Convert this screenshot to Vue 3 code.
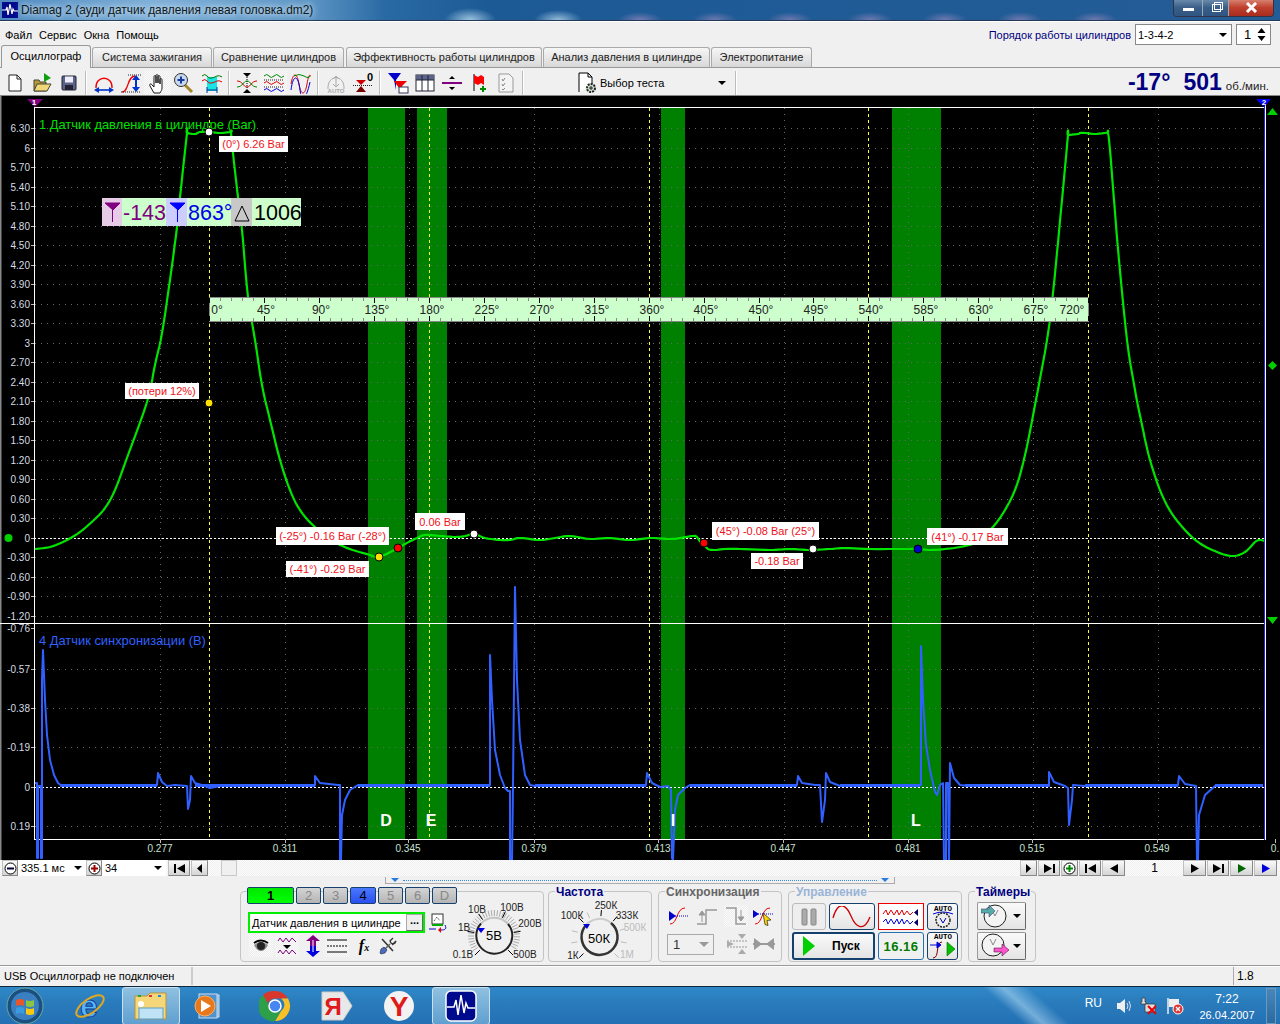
<template>
  <div class="window">
    <!-- title bar -->
    <div class="titlebar">
      <svg class="app-ico" width="16" height="16" viewBox="0 0 16 16">
        <rect width="16" height="16" fill="#000a8c" />
        <path d="M0 8h4l1-3 1 8 2-11 2 10 1-5 1 2h4" fill="none" stroke="#fff" stroke-width="1.2" />
      </svg>
      <span class="title">Diamag 2 (ауди датчик давления левая головка.dm2)</span>
      <div class="win-btns">
        <div class="wb wb-min"><i></i></div>
        <div class="wb wb-max"><b></b><b></b></div>
        <div class="wb wb-close">
          <svg width="13" height="11" viewBox="0 0 13 11">
            <path d="M2 1l9 9M11 1l-9 9" stroke="#fff" stroke-width="3" />
          </svg>
        </div>
      </div>
    </div>

    <!-- menu -->
    <div class="menubar">
      <span v-for="m in menu" :key="m" class="menu-item">{{ m }}</span>
      <span class="order-label">Порядок работы цилиндров</span>
      <div class="combo order-combo">1-3-4-2<span class="arrow"></span></div>
      <div class="combo spin">1
        <svg width="9" height="15" viewBox="0 0 9 15"><path d="M4.5 1l4 5h-8zM.5 9h8l-4 5z" fill="#000" /></svg>
      </div>
    </div>

    <!-- tabs -->
    <div class="tabs">
      <div v-for="t in tabs" :key="t.name" class="tab" :class="{ active: t.active }" :style="{ width: t.w + 'px' }">{{ t.name }}</div>
    </div>

    <!-- toolbar -->
    <div class="toolbar">
      <div class="tb"><svg class="ic" viewBox="0 0 22 22"><path d="M5 3h8l4 4v12H5z" fill="#fff" stroke="#222" /><path d="M13 3v4h4" fill="none" stroke="#222" /></svg></div>
      <div class="tb"><svg class="ic" viewBox="0 0 22 22"><path d="M3 19V8h5l1 2h6v9z" fill="#b89a3a" stroke="#443" /><path d="M3 19l3-7h14l-4 7z" fill="#f0d878" stroke="#443" /><path d="M13 1l7 5-7 4z" fill="#12a012" /></svg></div>
      <div class="tb"><svg class="ic" viewBox="0 0 22 22"><rect x="4" y="4" width="14" height="14" rx="1" fill="#5b6488" stroke="#223" /><rect x="7" y="4.500" width="8" height="6" fill="#eef" /><rect x="7" y="13" width="8" height="5" fill="#223" /></svg></div>
      <i class="sep"></i>
      <div class="tb"><svg class="ic" viewBox="0 0 22 22"><path d="M3 16C2 3 20 3 19 16" fill="none" stroke="#e00" stroke-width="1.3" /><path d="M3 18h16" stroke="#03c" stroke-width="1.6" /><path d="M1 18l5-3v6zM21 18l-5-3v6z" fill="#03c" /></svg></div>
      <div class="tb"><svg class="ic" viewBox="0 0 22 22"><path d="M2 20C9 20 7 4 15 4" fill="none" stroke="#e00" stroke-width="1.3" /><path d="M8 3h13M1 20h20" stroke="#222" stroke-dasharray="1 1" /><path d="M16 6v12" stroke="#03c" stroke-width="2" /><path d="M16 3l4 5h-8zM16 20l4-5h-8z" fill="#03c" /></svg></div>
      <div class="tb dither"><svg class="ic" viewBox="0 0 22 22"><path d="M7 21L3 14c-1-2 1-3 2-1l2 2V5c0-2 2-2 2 0v6V4c0-2 2-2 2 0v7V5c0-2 2-2 2 0v7V8c0-2 2-2 2 0v8c0 2-1 3-2 5z" fill="#fff" stroke="#000" stroke-width=".9" /></svg></div>
      <div class="tb zoom-tb"><svg class="ic" viewBox="0 0 22 22"><path d="M13 13l7 7" stroke="#a8862a" stroke-width="3" /><circle cx="9" cy="8" r="6.5" fill="#c8d8ee" stroke="#333" /><path d="M9 4.500v7M5.500 8h7" stroke="#1638a0" stroke-width="2" /></svg></div>
      <div class="tb"><svg class="ic" viewBox="0 0 22 22"><rect x="6" y="5" width="10" height="14" fill="#19e4e4" /><path d="M1 4q3-3 5 0t5 2 5-2 5 1" fill="none" stroke="#070" /><path d="M1 9q3-3 5 0t5 2 5-2 5 1" fill="none" stroke="#d00" /><path d="M6 18h10" stroke="#039" /><path d="M6 15v6M16 15v6" stroke="#039" /></svg></div>
      <i class="sep"></i>
      <div class="tb"><svg class="ic" viewBox="0 0 22 22"><path d="M1 9c6 0 6 6 10 6s4-6 10-6" fill="none" stroke="#d00" /><path d="M1 15c6 0 6-6 10-6s4 6 10 6" fill="none" stroke="#080" /><path d="M7 1h8l-4 4zM7 21h8l-4-4z" fill="#000" /><path d="M11 5v12" stroke="#000" stroke-dasharray="1 1" /></svg></div>
      <div class="tb dither"><svg class="ic" viewBox="0 0 22 22"><path d="M1 4q3-3 5 0t5 0 5 0 5 0" fill="none" stroke="#080" /><path d="M1 11q3-3 5 0t5 0 5 0 5 0" fill="none" stroke="#d00" /><path d="M1 18q3-3 5 0t5 0 5 0 5 0" fill="none" stroke="#00d" /><path d="M1 8h20M1 15h20" stroke="#222" stroke-dasharray="1 1" /></svg></div>
      <div class="tb"><svg class="ic" viewBox="0 0 22 22"><path d="M1 12c2-12 6-12 8 0s6 12 8 0 3-8 4-8" fill="none" stroke="#d00" /><path d="M1 18c2-16 7-16 9 0s7 6 10-8" fill="none" stroke="#00d" /><path d="M4 4q5-3 10 0t6 0" fill="none" stroke="#080" /></svg></div>
      <i class="sep"></i>
      <div class="tb"><svg class="ic" viewBox="0 0 22 22"><path d="M3 17C2 2 20 2 19 17" fill="none" stroke="#aaa" /><path d="M11 5v9M8 7l3-3 3 3M8 12l3 3 3-3" fill="none" stroke="#aaa" /><text x="11" y="21" class="t-auto" fill="#aaa">AUTO</text></svg></div>
      <div class="tb"><svg class="ic" viewBox="0 0 22 22"><path d="M4 8h10l-5 5z" fill="#c00" /><path d="M4 20h10l-5-6z" fill="#700" /><path d="M1 13.500h20" stroke="#222" stroke-dasharray="1 1" /><text x="15" y="9" class="t-zero">0</text></svg></div>
      <i class="sep"></i>
      <div class="tb"><svg class="ic" viewBox="0 0 22 22"><path d="M1 1h13L9 8v10L7 8z" fill="#00c" /><path d="M7 9h13l-5 5v6z" fill="#e00" /><rect x="12" y="15" width="9" height="6" fill="#fff" stroke="#335" /></svg></div>
      <div class="tb"><svg class="ic" viewBox="0 0 22 22"><rect x="2" y="3" width="18" height="16" fill="#fff" stroke="#223" /><rect x="2" y="3" width="18" height="5" fill="#5b6488" /><path d="M8 3v16M14 3v16M2 8h18" stroke="#223" /></svg></div>
      <div class="tb"><svg class="ic" viewBox="0 0 22 22"><path d="M1 11h20" stroke="#800080" stroke-width="2" /><path d="M8 7h6l-3-3zM8 15h6l-3 3z" fill="#000" /></svg></div>
      <div class="tb"><svg class="ic" viewBox="0 0 22 22"><path d="M6 2v17" stroke="#000" /><path d="M6 3l4 2 3-2 3 2v8l-3-2-3 2-4-2z" fill="#f00" /><path d="M15 14v6M12 17h6" stroke="#080" stroke-width="2" /></svg></div>
      <div class="tb"><svg class="ic" viewBox="0 0 22 22"><path d="M4 2h10l4 4v14H4z" fill="#f4f4f4" stroke="#999" /><path d="M7 7l1 2 2-3M7 12l1 2 2-3M7 17l1 1 2-2" fill="none" stroke="#888" /></svg></div>
      <i class="sep"></i>
      <div class="test-select">
        <svg width="22" height="22" viewBox="0 0 22 22"><path d="M3 20V1h9l4 4v8" fill="#fff" stroke="#000" /><path d="M12 1v4h4" fill="none" stroke="#000" /><circle cx="15" cy="16" r="4" fill="#cfe0cf" stroke="#222" stroke-dasharray="2 1" stroke-width="2" /><path d="M13 16h4M15 14v4" stroke="#222" /></svg>
        <span>Выбор теста</span>
        <span class="arrow test-arrow"></span>
      </div>
      <i class="sep"></i>
      <div class="rpm">
        <b>-17°</b><b class="rpm-val">501</b><span>об./мин.</span>
      </div>
    </div>

    <!-- oscillogram: free canvas, page coordinates -->
    <svg class="scope" width="1280" height="764" viewBox="0 96 1280 764">
      <rect x="0" y="96" width="1280" height="764" fill="#000" />
      <rect x="0" y="96" width="1.5" height="764" fill="#888" />
      <rect v-for="b in bands" :key="b.l" :x="b.x" y="107" :width="b.w" height="732" fill="#008000" />

      <g class="crisp">
        <line v-for="g in gridX" :key="g" :x1="g" :x2="g" y1="108" y2="839" class="dots" />
        <line v-for="g in topAxis" :key="'t' + g.y" x1="35" x2="1265" :y1="g.y" :y2="g.y" class="dots" />
        <line v-for="g in lowGrid" :key="g" x1="35" x2="1265" :y1="g" :y2="g" class="dots" />
        <line v-for="g in cursors" :key="'c' + g" :x1="g" :x2="g" y1="108" y2="839" class="cursor" />
        <line x1="34" x2="1265" y1="538.5" y2="538.5" class="zero" />
        <line x1="34" x2="1265" y1="787.5" y2="787.5" class="zero" />
        <line x1="34" x2="1265" y1="107.5" y2="107.5" stroke="#fff" />
        <line x1="0" x2="1265" y1="623.5" y2="623.5" stroke="#fff" />
        <line x1="34" x2="1265" y1="839.5" y2="839.5" stroke="#fff" />
        <line x1="34.5" x2="34.5" y1="107" y2="840" stroke="#fff" />
        <line x1="1265.5" x2="1265.5" y1="100" y2="840" stroke="#fff" />
        <line x1="1264.5" x2="1264.5" y1="100" y2="840" stroke="#22f" />
        <line x1="34.5" x2="34.5" y1="99" y2="107" stroke="#800080" />
        <line v-for="g in topAxis" :key="'k' + g.y" x1="31" x2="34" :y1="g.y" :y2="g.y" stroke="#bbb" />
        <line v-for="g in lowAxis" :key="'l' + g.y" x1="31" x2="34" :y1="g.y" :y2="g.y" stroke="#bbb" />
        <line v-for="g in timeAxis" :key="'m' + g.x" :x1="g.x" :x2="g.x" y1="839" y2="843" stroke="#bbb" />
      </g>

      <polyline :points="greenTrace" class="trace green" />
      <polyline :points="blueTrace" class="trace blue" />
      <line v-for="s in blueBase" :key="s[0]" :x1="s[0]" :x2="s[1]" y1="785.5" y2="785.5" class="base" />

      <text v-for="g in topAxis" :key="'a' + g.y" x="30" :y="g.y + 3.5" class="axis" text-anchor="end">{{ g.t }}</text>
      <text v-for="g in lowAxis" :key="'b' + g.y" x="30" :y="g.y + 3.5" class="axis" text-anchor="end">{{ g.t }}</text>
      <text v-for="g in timeAxis" :key="'d' + g.x" :x="g.x" y="852" class="axis time" text-anchor="middle">{{ g.t }}</text>

      <text x="39" y="129" class="trace-name" fill="#00e000">1 Датчик давления в цилиндре (Bar)</text>
      <text x="39" y="645" class="trace-name" fill="#3060ff">4 Датчик синхронизации (B)</text>

      <text v-for="b in bands" :key="'n' + b.l" :x="b.lx" y="826" class="band-letter" text-anchor="middle">{{ b.l }}</text>

      <!-- scale markers -->
      <polygon points="27,99 43,99 35,107" fill="#800080" />
      <text x="34" y="105" class="mark-num" text-anchor="middle">1</text>
      <polygon points="1256,99 1271,99 1264,107" fill="#00f" />
      <text x="1264" y="105" class="mark-num" text-anchor="middle">2</text>
      <polygon points="1267,115 1278,115 1272.5,108" fill="#00d000" />
      <polygon points="1272.5,361 1277,365.5 1272.5,370 1268,365.5" fill="#00d000" />
      <polygon points="1267,617 1278,617 1272.5,624" fill="#00d000" />
      <circle cx="8.5" cy="538" r="4" fill="#00d000" />

      <!-- degree ruler -->
      <rect x="209.5" y="297.5" width="879" height="24" fill="#ccffcc" stroke="#888" />
      <g class="crisp">
        <line v-for="t in rulerTicks" :key="t.x" :x1="t.x" :x2="t.x" y1="298" :y2="t.major ? 303 : 301" :stroke="t.major ? '#000' : '#888'" />
        <line v-for="t in rulerTicks" :key="'r' + t.x" :x1="t.x" :x2="t.x" y1="321" :y2="t.major ? 316 : 318" :stroke="t.major ? '#000' : '#888'" />
      </g>
      <text v-for="r in rulerLabels" :key="r.t" :x="r.x" y="314" class="ruler-txt" text-anchor="middle">{{ r.t }}</text>

      <!-- cursor readout -->
      <rect x="102" y="198" width="20" height="28" fill="#e6cce6" />
      <rect x="122" y="198" width="44" height="28" fill="#ccffcc" />
      <rect x="166" y="198" width="21" height="28" fill="#ccccff" />
      <rect x="187" y="198" width="44" height="28" fill="#ccffcc" />
      <rect x="231" y="198" width="21" height="28" fill="#c8c8c8" />
      <rect x="252" y="198" width="49" height="28" fill="#ccffcc" />
      <path d="M105 203h15l-7 7zM112.5 207v15" fill="#800080" stroke="#800080" />
      <path d="M170 203h15l-7 7zM177.5 207v15" fill="#00f" stroke="#00f" />
      <path d="M242 206l7 15h-14z" fill="none" stroke="#000" />
      <text x="123" y="219.5" class="read" fill="#800080">-143</text>
      <text x="188" y="219.5" class="read" fill="#0000e8">863°</text>
      <text x="254" y="219.5" class="read" fill="#000">1006</text>

      <!-- value labels -->
      <g v-for="l in labels" :key="l.t">
        <rect :x="l.x" :y="l.y" :width="l.w" :height="l.h" fill="#fff" />
        <text :x="l.x + l.w / 2" :y="l.y + l.h / 2 + 4" class="val" text-anchor="middle">{{ l.t }}</text>
      </g>
      <circle v-for="d in dots" :key="d.x + '-' + d.y" :cx="d.x" :cy="d.y" r="4" :fill="d.c" stroke="#000" />
    </svg>

    <!-- scroll row -->
    <div class="nav">
      <div class="nb round"><svg width="13" height="13" viewBox="0 0 13 13"><circle cx="6.5" cy="6.5" r="5.5" fill="#fff" stroke="#000" /><path d="M3 6.500h7" stroke="#003" stroke-width="2" /></svg></div>
      <div class="nav-combo w-time">335.1 мс<span class="arrow"></span></div>
      <div class="nb round"><svg width="13" height="13" viewBox="0 0 13 13"><circle cx="6.5" cy="6.5" r="5.5" fill="#fff" stroke="#000" /><path d="M3 6.500h7M6.500 3v7" stroke="#900" stroke-width="2" /></svg></div>
      <div class="nav-combo w-num">34<span class="arrow"></span></div>
      <div class="nb w22"><svg width="11" height="9" viewBox="0 0 11 9"><path d="M0 0h2v9H0zM11 0v9L3 4.500z" /></svg></div>
      <div class="nb w16"><svg width="5" height="9" viewBox="0 0 5 9"><path d="M5 0v9L0 4.500z" /></svg></div>
      <div class="thumb"></div>
      <div class="nav-fill"></div>
      <div class="nb w16"><svg width="5" height="9" viewBox="0 0 5 9"><path d="M0 0v9l5-4.500z" /></svg></div>
      <div class="nb w22"><svg width="11" height="9" viewBox="0 0 11 9"><path d="M9 0h2v9H9zM0 0v9l8-4.500z" /></svg></div>
      <div class="nb w16 flat"><svg width="13" height="13" viewBox="0 0 13 13"><circle cx="6.5" cy="6.5" r="5.5" fill="#fff" stroke="#000" /><path d="M3 6.500h7M6.500 3v7" stroke="#080" stroke-width="2" /></svg></div>
      <div class="nb w22"><svg width="11" height="9" viewBox="0 0 11 9"><path d="M0 0h2v9H0zM11 0v9L3 4.500z" /></svg></div>
      <div class="nb w23"><svg width="8" height="9" viewBox="0 0 8 9"><path d="M8 0v9L0 4.500z" /></svg></div>
      <div class="page-num">1</div>
      <div class="nb w23"><svg width="8" height="9" viewBox="0 0 8 9"><path d="M0 0v9l8-4.500z" /></svg></div>
      <div class="nb w22"><svg width="11" height="9" viewBox="0 0 11 9"><path d="M9 0h2v9H9zM0 0v9l8-4.500z" /></svg></div>
      <div class="nb w23"><svg width="8" height="9" viewBox="0 0 8 9"><path d="M0 0v9l8-4.500z" fill="#060" /></svg></div>
      <div class="nb w23"><svg width="8" height="9" viewBox="0 0 8 9"><path d="M0 0v9l8-4.500z" fill="#00d" /></svg></div>
    </div>

    <!-- control panel -->
    <div class="panel">
      <div class="strip"><span class="tri"></span><span class="strip-dots"></span><span class="tri"></span></div>
      <div class="groups">
        <!-- channel -->
        <div class="group g-channel">
          <div class="ch-left">
            <div class="ch-tabs">
              <div v-for="c in channels" :key="c.t" class="ch" :class="c.cls">{{ c.t }}</div>
            </div>
            <div class="ch-input-row">
              <div class="ch-input">Датчик давления в цилиндре<span class="dots-btn">...</span></div>
              <svg width="18" height="20" viewBox="0 0 18 20"><rect x="3" y="1" width="11" height="10" fill="#fff" stroke="#333" /><path d="M5 8l3-4 3 4" fill="none" stroke="#333" stroke-dasharray="1 1" /><rect x="3" y="11" width="11" height="2" fill="#0a0" /><path d="M0 16h7M16 12c2 4 0 5-4 5" fill="none" stroke="#00c" /><path d="M12 14v6l-3-3z" fill="#e00" /></svg>
            </div>
            <div class="ch-icons">
              <div class="ci dither"><svg width="18" height="14" viewBox="0 0 18 14"><path d="M2 6q7-6 14 0-3 6-7 6T2 6z" fill="#888" /><circle cx="9" cy="7" r="4" fill="#222" /><path d="M2 4q7-5 14 0" fill="none" stroke="#000" stroke-width="2" /></svg></div>
              <div class="ci dither"><svg width="20" height="20" viewBox="0 0 20 20"><path d="M1 5l2-3 3 4 3-4 3 4 3-4 4 4M1 17l2-3 3 4 3-4 3 4 3-4 4 4" fill="none" stroke="#800080" /><path d="M6 9h8l-4 4z" fill="#000" /></svg></div>
              <div class="ci narrow"><svg width="18" height="22" viewBox="0 0 18 22"><path d="M9 0l7 6h-4v5H6V6H2z" fill="#800080" /><path d="M9 22l7-6h-4v-5H6v5H2z" fill="#00d" /><path d="M9 5v12" stroke="#fff" /></svg></div>
              <div class="ci dither"><svg width="20" height="14" viewBox="0 0 20 14"><path d="M0 1h20M0 13h20" stroke="#000" /><path d="M0 7h20" stroke="#000" stroke-dasharray="2 1" /></svg></div>
              <div class="ci fx">f<small>x</small></div>
              <div class="ci"><svg width="18" height="18" viewBox="0 0 18 18"><path d="M3 2l11 12" stroke="#333" stroke-width="1.6" /><path d="M14 1l-3 3 1 2 2 1 3-3-1 2-3 2" fill="none" stroke="#333" stroke-width="1.3" /><path d="M11 7L6 12" stroke="#666" stroke-width="1.6" /><path d="M1 16l1-4 3-2 3 3-2 3-4 1z" fill="#4a6cc0" stroke="#223" stroke-width=".6" /></svg></div>
            </div>
          </div>
          <svg class="knob" width="93" height="66" viewBox="-7 0 93 66">
            <line v-for="(t, i) in hatch" :key="i" :x1="t.x1" :y1="t.y1" :x2="t.x2" :y2="t.y2" stroke="#aaa" />
            <line v-for="(t, i) in hatchMajor" :key="'k' + i" :x1="t.x1" :y1="t.y1" :x2="t.x2" :y2="t.y2" stroke="#000" />
            <path d="M25 26.500A18 18 0 0 1 52 27" fill="none" stroke="#c4c4c4" stroke-width="2" />
            <path d="M52 27A18 18 0 1 1 25 26.500" fill="none" stroke="#222" stroke-width="2" />
            <path d="M21 31h8l-4 5z" fill="#00d" />
            <text x="38" y="43" class="knob-val" text-anchor="middle">5В</text>
            <text x="21" y="16" class="knob-lab" text-anchor="middle">10В</text>
            <text x="56" y="14" class="knob-lab" text-anchor="middle">100В</text>
            <text x="8" y="34" class="knob-lab" text-anchor="middle">1В</text>
            <text x="74" y="30" class="knob-lab" text-anchor="middle">200В</text>
            <text x="7" y="61" class="knob-lab" text-anchor="middle">0.1В</text>
            <text x="69" y="61" class="knob-lab" text-anchor="middle">500В</text>
          </svg>
        </div>

        <!-- frequency -->
        <div class="group g-freq">
          <span class="legend navy">Частота</span>
          <svg class="knob" width="104" height="71" viewBox="0 0 104 71">
            <line v-for="(t, i) in sparse" :key="i" :x1="t.x1" :y1="t.y1" :x2="t.x2" :y2="t.y2" :stroke="t.c" />
            <path d="M37 33A18 18 0 0 1 62 31" fill="none" stroke="#ccc" stroke-width="2" />
            <path d="M62 31A18 18 0 1 1 37 33" fill="none" stroke="#333" stroke-width="2.5" />
            <path d="M34 32h7l-3 5z" fill="#00d" />
            <text x="50" y="51" class="knob-val" text-anchor="middle">50К</text>
            <text x="23" y="27" class="knob-lab" text-anchor="middle">100К</text>
            <text x="57" y="17" class="knob-lab" text-anchor="middle">250К</text>
            <text x="78" y="27" class="knob-lab" text-anchor="middle">333К</text>
            <text x="86" y="39" class="knob-lab off" text-anchor="middle">500К</text>
            <text x="24" y="67" class="knob-lab" text-anchor="middle">1К</text>
            <text x="78" y="66" class="knob-lab off" text-anchor="middle">1М</text>
          </svg>
        </div>

        <!-- sync -->
        <div class="group g-sync">
          <span class="legend grey">Синхронизация</span>
          <div class="sync-row">
            <svg class="si" viewBox="0 0 24 22"><path d="M3 19c8 0 6-16 15-16" fill="none" stroke="#e00" /><path d="M6 11h16" stroke="#00c" stroke-dasharray="1 1" /><path d="M2 6l7 5-7 5z" fill="#00c" /></svg>
            <svg class="si" viewBox="0 0 24 22"><path d="M2 19h9V5h11" fill="none" stroke="#999" stroke-width="1.5" /><path d="M7 17V7M4 10l3-4 3 4z" fill="#999" stroke="#999" /></svg>
            <svg class="si dither" viewBox="0 0 24 22"><path d="M2 3h10v16h10" fill="none" stroke="#999" stroke-width="1.5" /><path d="M17 5v10M14 12l3 4 3-4z" fill="#999" stroke="#999" /></svg>
            <svg class="si" viewBox="0 0 24 22"><path d="M3 19c8 0 6-16 15-16" fill="none" stroke="#e00" /><path d="M6 9h16" stroke="#00c" stroke-dasharray="1 1" /><path d="M1 5l6 4-6 4z" fill="#00c" /><path d="M11 8l8 7-4 .5 1 5-3-1z" fill="#ffd400" stroke="#222" stroke-width=".7" /></svg>
          </div>
          <div class="sync-row second">
            <div class="combo sync-combo">1<span class="arrow grey-arrow"></span></div>
            <svg class="si first" viewBox="0 0 24 22"><path d="M2 8h20M2 14h20" stroke="#999" stroke-dasharray="2 1" /><path d="M13 1h8l-4 5zM13 21h8l-4-5z" fill="#aaa" /><path d="M2 8l7 3-7 3z" fill="#aaa" /></svg>
            <svg class="si" viewBox="0 0 24 22"><path d="M1 11h22" stroke="#999" stroke-width="2" /><path d="M2 5l8 6-8 6zM22 5l-8 6 8 6z" fill="#999" /></svg>
          </div>
        </div>

        <!-- control -->
        <div class="group g-ctrl">
          <span class="legend faded">Управление</span>
          <div class="btn b-flat"><svg width="16" height="18" viewBox="0 0 16 18"><rect x="1" y="1" width="5" height="16" rx="1" fill="#aaa" stroke="#888" /><rect x="10" y="1" width="5" height="16" rx="1" fill="#aaa" stroke="#888" /></svg></div>
          <div class="btn b-navy"><svg width="40" height="22" viewBox="0 0 40 22"><path d="M1 12C6-6 14-2 19 10s13 16 19 1" fill="none" stroke="#c00" stroke-width="1.3" /></svg></div>
          <div class="btn b-red"><svg width="40" height="20" viewBox="0 0 40 20"><path d="M2 7l3-4 2 5 3-5 3 5 3-5 2 5 3-5 2 5 3-4 3 4 3-3" fill="none" stroke="#d00" /><path d="M2 15l3-3 2 5 3-5 3 5 3-5 2 5 3-5 2 5 3-4 3 4 3-3" fill="none" stroke="#00d" /><path d="M37 2v7l-4-3.500zM37 12v7l-4-3.500z" fill="#006" /></svg></div>
          <div class="btn b-navy"><svg width="26" height="24" viewBox="0 0 26 24"><text x="13" y="6" class="t-btn-auto">AUTO</text><path d="M3 9q10-4 20 0" fill="none" stroke="#00d" /><circle cx="13" cy="15" r="7" fill="#eee" stroke="#222" stroke-dasharray="2 1" stroke-width="1.5" /><path d="M10 13l3 5 3-5" fill="none" stroke="#00a" /></svg></div>
          <div class="btn b-navy b-start">
            <svg width="14" height="20" viewBox="0 0 14 20"><path d="M1 0l12 10L1 20z" fill="#00d000" /></svg>
            <span>Пуск</span>
          </div>
          <div class="btn b-blue b-time">16.16</div>
          <div class="btn b-navy"><svg width="26" height="26" viewBox="0 0 26 26"><text x="13" y="6" class="t-btn-auto">AUTO</text><path d="M3 25c7 0 2-16 9-16" fill="none" stroke="#800" /><path d="M0 12h7M7 9l4 3-4 3z" fill="#00d" stroke="#00d" /><path d="M17 9l8 7-8 7z" fill="#00c000" stroke="#060" stroke-width=".6" /></svg></div>
        </div>

        <!-- timers -->
        <div class="group g-timers">
          <span class="legend navy">Таймеры</span>
          <div class="btn timer">
            <svg width="30" height="24" viewBox="0 0 30 24"><circle cx="14" cy="12" r="11" fill="#f4f4f4" stroke="#222" /><path d="M14 12l3-6M14 12l-3-6" stroke="#888" /><path d="M0 5h8V1l6 6-6 6V9H0z" fill="#55aaaa" stroke="#336" stroke-width=".5" /></svg>
            <span class="arrow"></span>
          </div>
          <div class="btn timer">
            <svg width="30" height="26" viewBox="0 0 30 26"><circle cx="12" cy="12" r="11" fill="#f4f4f4" stroke="#222" /><path d="M12 12l3-6M12 12l-3-6" stroke="#888" /><path d="M13 15h8v-4l7 6-7 6v-4h-8z" fill="#ff55cc" stroke="#303" stroke-width=".5" /></svg>
            <span class="arrow"></span>
          </div>
        </div>
      </div>
    </div>

    <!-- status -->
    <div class="status">
      <span class="st-main">USB Осциллограф не подключен</span>
      <span class="st-fill"></span>
      <span class="st-ver">1.8</span>
    </div>

    <!-- taskbar -->
    <div class="taskbar">
      <svg class="orb" width="40" height="38" viewBox="0 0 40 38">
        <circle cx="20" cy="19" r="18" fill="#1a4f80" stroke="#6aa" />
        <circle cx="20" cy="19" r="14" fill="#3a7fc0" />
        <path d="M11 13q4-2 8 0v6q-4-2-8 0z" fill="#e8562a" />
        <path d="M21 13q4 2 8 0v6q-4 2-8 0z" fill="#8cc63f" />
        <path d="M11 21q4-2 8 0v6q-4-2-8 0z" fill="#3a9be0" />
        <path d="M21 21q4 2 8 0v6q-4 2-8 0z" fill="#fdc70c" />
      </svg>
      <div class="task t-ie">
        <svg width="34" height="34" viewBox="0 0 34 34">
          <text x="16" y="28" class="ie">e</text>
          <ellipse cx="17" cy="17" rx="16" ry="7" transform="rotate(-35 17 17)" fill="none" stroke="#e0a820" stroke-width="2" />
        </svg>
      </div>
      <div class="task t-active t-folder">
        <svg width="38" height="32" viewBox="0 0 38 32">
          <path d="M3 6h12l3-3h16v26H3z" fill="#f5d77a" stroke="#b8923a" />
          <rect x="6" y="5" width="3" height="2" fill="#2a2" /><rect x="17" y="5" width="3" height="2" fill="#d33" /><rect x="26" y="5" width="3" height="2" fill="#28d" />
          <rect x="7" y="18" width="24" height="11" fill="#bfe3f5" stroke="#5a9fcb" />
          <circle cx="9" cy="14" r="3" fill="#fff" />
        </svg>
      </div>
      <div class="task t-wmp">
        <svg width="34" height="30" viewBox="0 0 34 30">
          <rect x="14" y="4" width="16" height="22" fill="#7fb8e0" stroke="#cde" />
          <rect x="10" y="3" width="18" height="24" fill="#4f92cc" stroke="#cde" />
          <circle cx="16" cy="15" r="10" fill="#e8781c" stroke="#ffb060" />
          <path d="M12 9l10 6-10 6z" fill="#fff" />
        </svg>
      </div>
      <div class="task t-chrome">
        <svg width="32" height="32" viewBox="0 0 32 32">
          <path d="M16 1a15 15 0 0 1 13 7.500H16a7.500 7.500 0 0 0-7 5L4 5A15 15 0 0 1 16 1z" fill="#d9372c" />
          <path d="M29 8.500A15 15 0 0 1 16 31l6-10a7.500 7.500 0 0 0 0-12.500z" fill="#f6c026" />
          <path d="M16 31A15 15 0 0 1 4 5l6.500 11.500A7.500 7.500 0 0 0 22 21z" fill="#2d9f48" />
          <circle cx="16" cy="16" r="6" fill="#4586f2" stroke="#fff" stroke-width="1.5" />
        </svg>
      </div>
      <div class="task t-ya">
        <svg width="34" height="32" viewBox="0 0 34 32">
          <path d="M2 2h21l9 14-9 14H2z" fill="#e8e8e8" stroke="#ccc" />
          <text x="13" y="25" class="ya">Я</text>
        </svg>
      </div>
      <div class="task t-yb">
        <svg width="32" height="32" viewBox="0 0 32 32">
          <circle cx="16" cy="16" r="15" fill="#f2f2f2" />
          <text x="16" y="26" class="yb">Y</text>
        </svg>
      </div>
      <div class="task t-active t-app">
        <svg width="32" height="32" viewBox="0 0 32 32">
          <rect x="1" y="1" width="30" height="30" rx="5" fill="#000a8c" stroke="#fff" stroke-width="1.5" />
          <path d="M2 17h7l2-7 2 15 3-20 3 18 2-10 2 5h7" fill="none" stroke="#fff" stroke-width="1.5" />
        </svg>
      </div>
      <div class="tray">
        <span class="lang">RU</span>
        <svg width="16" height="16" viewBox="0 0 16 16"><path d="M1 5h3l5-4v14l-5-4H1z" fill="#eee" /><path d="M11 5q2 3 0 6M13 3q3 5 0 10" fill="none" stroke="#dde" /></svg>
        <svg width="18" height="18" viewBox="0 0 18 18"><path d="M2 1h3v4h1v2H1V5h1zM5 7h10v8H5z" fill="#ddd" stroke="#333" stroke-width=".7" /><path d="M8 9l8 8M16 9l-8 8" stroke="#e00" stroke-width="2" /></svg>
        <svg width="18" height="18" viewBox="0 0 18 18"><path d="M2 1v16" stroke="#eee" stroke-width="1.5" /><path d="M3 2h10v8H3z" fill="#eee" /><circle cx="12" cy="12" r="5" fill="#d33" stroke="#fff" /><path d="M10 10l4 4M14 10l-4 4" stroke="#fff" stroke-width="1.3" /></svg>
        <div class="clock"><span>7:22</span><span class="date">26.04.2007</span></div>
        <div class="show-desk"></div>
      </div>
    </div>
  </div>
</template>

<script setup>
const menu = ['Файл', 'Сервис', 'Окна', 'Помощь']
const tabs = [
  { name: 'Осциллограф', w: 90, active: true },
  { name: 'Система зажигания', w: 120 },
  { name: 'Сравнение цилиндров', w: 131 },
  { name: 'Эффективность работы цилиндров', w: 196 },
  { name: 'Анализ давления в цилиндре', w: 167 },
  { name: 'Электропитание', w: 101 }
]
const channels = [
  { t: '1', cls: 'on-green' },
  { t: '2' },
  { t: '3' },
  { t: '4', cls: 'on-blue' },
  { t: '5' },
  { t: '6' },
  { t: 'D' }
]

const topVals = ['6.30', '6', '5.70', '5.40', '5.10', '4.80', '4.50', '4.20', '3.90', '3.60', '3.30', '3', '2.70', '2.40', '2.10', '1.80', '1.50', '1.20', '0.90', '0.60', '0.30', '0', '-0.30', '-0.60', '-0.90', '-1.20']
const topAxis = topVals.map((t, i) => ({ t, y: Math.round(128 + i * 19.5) + 0.5 }))
const lowAxis = [
  { t: '-0.76', y: 628.5 },
  { t: '-0.57', y: 669.5 },
  { t: '-0.38', y: 708.5 },
  { t: '-0.19', y: 747.5 },
  { t: '0', y: 787.5 },
  { t: '0.19', y: 826.5 }
]
const lowGrid = [669.5, 708.5, 747.5, 826.5]
const gridX = [160.5, 285.5, 409.5, 534.5, 659.5, 784.5, 908.5, 1033.5, 1158.5]
const cursors = [209.5, 429.5, 649.5, 868.5, 1088.5]
const timeAxis = [
  { t: '0.277', x: 160 },
  { t: '0.311', x: 285 },
  { t: '0.345', x: 408 },
  { t: '0.379', x: 534 },
  { t: '0.413', x: 658 },
  { t: '0.447', x: 783 },
  { t: '0.481', x: 908 },
  { t: '0.515', x: 1032 },
  { t: '0.549', x: 1157 },
  { t: '0.', x: 1275 }
]
const bands = [
  { l: 'D', x: 368, w: 37, lx: 386 },
  { l: 'E', x: 417, w: 30, lx: 431 },
  { l: 'I', x: 661, w: 24, lx: 673 },
  { l: 'L', x: 892, w: 49, lx: 916 }
]

// Catmull-Rom through the traced points; a repeated point keeps a sharp corner
const smooth = (str) => {
  const p = str.split(' ').map((s) => s.split(',').map(Number))
  const out = []
  for (let i = 0; i < p.length - 1; i++) {
    const a = p[Math.max(i - 1, 0)]
    const b = p[i]
    const c = p[i + 1]
    const d = p[Math.min(i + 2, p.length - 1)]
    for (let k = 0; k < 5; k++) {
      const t = k / 5
      const f = (n) =>
        0.5 * (2 * b[n] + (c[n] - a[n]) * t + (2 * a[n] - 5 * b[n] + 4 * c[n] - d[n]) * t * t + (3 * b[n] - a[n] - 3 * c[n] + d[n]) * t * t * t)
      out.push(f(0).toFixed(1) + ',' + f(1).toFixed(1))
    }
  }
  out.push(p[p.length - 1].join(','))
  return out.join(' ')
}

const greenTrace = smooth('35,549 50,547 65,541 80,532 95,519 105,508 115,490 128,455 147,402 155,365 162,333 170,280 177,227 180,197 187,133 187,133 195,134 200,132 209,132 220,133 231,132 231,132 233,153 238,197 242,230 248,297 255,340 262,385 270,420 280,460 290,490 300,510 315,527 340,545 370,555 379,557 398,548 405,544 417,538 425,535 440,536 455,537 465,536 474,534 485,538 500,540 510,540 520,538 540,540 555,538 570,536 590,539 610,538 630,540 650,538 670,539 680,538 693,536 697,537 701,543 704,544 708,549 715,550 725,549 740,549 770,550 790,549 810,550 830,549 845,548 870,549 900,549 918,549 930,550 945,549 960,547 975,543 985,535 1000,518 1015,490 1025,455 1035,405 1047,340 1053,293 1062,200 1068,135 1068,135 1078,134 1080,133 1085,133 1095,134 1105,133 1108,132 1108,132 1110,150 1114,200 1119,260 1127,340 1135,390 1142,425 1150,460 1162,495 1175,518 1193,538 1210,549 1231,556 1245,552 1255,542 1260,540 1264,541')
const blueTrace = '35,783 37,783 37,858 38,858 38,786 41,786 41,858 42,858 42,680 43,650 45,700 47,735 50,760 54,775 58,783 62,786 70,785 157,785 158,773 162,782 167,786 175,785 187,786 188,809 190,800 191,776 195,783 205,786 210,788 220,786 315,785 315,776 320,783 338,785 340,785 340,860 341,860 342,815 345,800 350,790 358,785 490,785 490,655 492,700 495,750 500,775 505,788 508,791 510,791 510,860 512,860 513,787 515,587 517,680 520,740 525,775 530,785 535,786 646,785 647,773 652,783 660,787 668,786 671,790 672,858 673,860 675,810 678,795 685,788 690,785 797,785 798,776 802,783 815,785 820,785 822,822 825,800 826,773 830,782 840,786 848,785 921,785 921,646 923,700 926,745 930,770 935,792 937,795 940,785 943,783 944,860 946,860 946,783 948,783 949,860 950,763 954,778 960,785 970,786 1049,786 1049,772 1054,782 1065,786 1068,788 1069,825 1072,800 1073,785 1085,786 1178,785 1179,776 1185,784 1196,786 1197,860 1198,860 1199,815 1205,795 1215,786 1263,785'
// the flat stretches of the sync trace are thicker than its spikes
const blueBase = [[60, 157], [195, 315], [358, 490], [535, 646], [690, 797], [840, 920], [965, 1049], [1085, 1178], [1215, 1263]]

const rulerTicks = Array.from({ length: 81 }, (_, i) => ({
  x: Math.round(209 + i * 10.99) + 0.5,
  major: i % 5 === 0
}))
const rulerLabels = [
  { t: '0°', x: 217 }, { t: '45°', x: 266 }, { t: '90°', x: 321 }, { t: '135°', x: 377 },
  { t: '180°', x: 432 }, { t: '225°', x: 487 }, { t: '270°', x: 542 }, { t: '315°', x: 597 },
  { t: '360°', x: 652 }, { t: '405°', x: 706 }, { t: '450°', x: 761 }, { t: '495°', x: 816 },
  { t: '540°', x: 871 }, { t: '585°', x: 926 }, { t: '630°', x: 981 }, { t: '675°', x: 1036 },
  { t: '720°', x: 1072 }
]

const labels = [
  { t: '(0°) 6.26 Bar', x: 219, y: 136, w: 69, h: 16 },
  { t: '(потери 12%)', x: 125, y: 383, w: 74, h: 16 },
  { t: '(-25°) -0.16 Bar (-28°)', x: 276, y: 527, w: 113, h: 18 },
  { t: '(-41°) -0.29 Bar', x: 286, y: 561, w: 83, h: 16 },
  { t: '0.06 Bar', x: 415, y: 513, w: 50, h: 17 },
  { t: '(45°) -0.08 Bar (25°)', x: 712, y: 522, w: 107, h: 18 },
  { t: '-0.18 Bar', x: 751, y: 553, w: 52, h: 16 },
  { t: '(41°) -0.17 Bar', x: 927, y: 528, w: 81, h: 17 }
]
const dots = [
  { x: 209, y: 132, c: '#fff' },
  { x: 209, y: 403, c: '#ffe000' },
  { x: 379, y: 557, c: '#ffe000' },
  { x: 398, y: 548, c: '#f00' },
  { x: 474, y: 534, c: '#fff' },
  { x: 704, y: 543, c: '#f00' },
  { x: 813, y: 549, c: '#fff' },
  { x: 918, y: 549, c: '#00c' }
]

// dial ticks around a knob centre, angles in degrees
const ray = (cx, cy, a, r1, r2) => {
  const s = Math.sin((a * Math.PI) / 180)
  const c = Math.cos((a * Math.PI) / 180)
  return { x1: cx + r1 * s, y1: cy - r1 * c, x2: cx + r2 * s, y2: cy - r2 * c }
}
const hatch = []
for (let a = -125; a <= 125; a += 7) hatch.push(ray(38, 39, a, 20, 26))
const hatchMajor = [-135, -80, -35, 25, 80, 135].map((a) => ray(38, 39, a, 20, 27))
const sparse = [
  { a: -135, c: '#000' }, { a: -100, c: '#bbb' }, { a: -75, c: '#bbb' }, { a: -45, c: '#000' },
  { a: -25, c: '#bbb' }, { a: 5, c: '#000' }, { a: 40, c: '#000' }, { a: 70, c: '#bbb' },
  { a: 100, c: '#bbb' }, { a: 135, c: '#bbb' }
].map((t) => ({ ...ray(50, 46, t.a, 22, 28), c: t.c }))
</script>

<style scoped>
.window {
  width: 1280px;
  height: 1024px;
  overflow: hidden;
  background: #f0f0f0;
  font-family: "Liberation Sans", Arial, sans-serif;
  font-size: 11px;
  color: #000;
}
svg {
  display: block;
  flex: none;
}

/* title bar */
.titlebar {
  height: 21px;
  display: flex;
  align-items: center;
  padding-left: 2px;
  box-sizing: border-box;
  border-bottom: 1px solid #223a55;
  background:
    radial-gradient(ellipse 26px 12px at 470px 20px, rgba(200, 230, 245, 0.75), transparent),
    radial-gradient(ellipse 24px 10px at 558px 20px, rgba(200, 230, 245, 0.7), transparent),
    radial-gradient(ellipse 22px 8px at 640px 20px, rgba(190, 150, 200, 0.55), transparent),
    radial-gradient(ellipse 22px 8px at 715px 20px, rgba(190, 150, 200, 0.5), transparent),
    radial-gradient(ellipse 22px 8px at 790px 20px, rgba(190, 150, 200, 0.5), transparent),
    radial-gradient(ellipse 22px 8px at 870px 20px, rgba(190, 150, 200, 0.5), transparent),
    radial-gradient(ellipse 22px 8px at 945px 20px, rgba(190, 150, 200, 0.5), transparent),
    radial-gradient(ellipse 22px 8px at 1020px 20px, rgba(190, 150, 200, 0.5), transparent),
    radial-gradient(ellipse 22px 8px at 1095px 20px, rgba(190, 150, 200, 0.5), transparent),
    linear-gradient(90deg, #4f8ac0 0, #7fb0d8 12%, #5f97c6 24%, #2a6aa4 30%, #1c5a96 38%, #245c96 100%);
}
.app-ico {
  margin-right: 3px;
}
.title {
  font-size: 11.9px;
  color: #101820;
  text-shadow: 0 0 6px #cfe3f2, 0 0 6px #cfe3f2;
}
.win-btns {
  margin-left: auto;
  margin-right: 6px;
  margin-top: -4px;
  height: 17px;
  display: flex;
  border: 1px solid #334;
  border-top: none;
  border-radius: 0 0 4px 4px;
  overflow: hidden;
}
.wb {
  display: flex;
  align-items: center;
  justify-content: center;
  width: 28px;
  background: linear-gradient(#6f8fae, #3a5f88 50%, #2e5682);
  border-right: 1px solid #9ab;
}
.wb-min i {
  display: block;
  width: 11px;
  height: 3px;
  margin-top: 4px;
  background: #fff;
}
.wb-max {
  width: 25px;
  position: relative;
}
.wb-max b {
  display: block;
  width: 7px;
  height: 6px;
  border: 1px solid #fff;
  position: absolute;
  left: 9px;
  top: 5px;
}
.wb-max b:first-child {
  left: 11px;
  top: 3px;
}
.wb-close {
  width: 44px;
  border-right: none;
  background: linear-gradient(#d98878, #c0402e 50%, #a82c1c);
}

/* menu */
.menubar {
  height: 26px;
  display: flex;
  align-items: center;
  padding-left: 5px;
  box-sizing: border-box;
  border-top: 1px solid #fff;
}
.menu-item {
  margin-right: 7px;
}
.order-label {
  margin-left: auto;
  color: #000080;
  margin-right: 4px;
}
.combo {
  position: relative;
  background: #fff;
  border: 1px solid #888;
  height: 21px;
  box-sizing: border-box;
  display: flex;
  align-items: center;
  padding-left: 2px;
}
.order-combo {
  width: 97px;
  margin-right: 4px;
}
.spin {
  width: 35px;
  margin-right: 9px;
  padding-left: 7px;
  font-size: 13px;
}
.spin svg {
  position: absolute;
  right: 4px;
  top: 2px;
}
.arrow {
  display: block;
  width: 0;
  height: 0;
  border: 4px solid transparent;
  border-top: 4px solid #000;
  border-bottom: none;
  margin-left: auto;
  margin-right: 4px;
}
.grey-arrow {
  border-top-color: #999;
  border-width: 5px;
  border-bottom: none;
}

/* tabs */
.tabs {
  height: 21px;
  display: flex;
  align-items: flex-end;
  padding-left: 1px;
  box-sizing: border-box;
  border-bottom: 1px solid #999;
  position: relative;
  z-index: 1;
}
.tab {
  height: 20px;
  box-sizing: border-box;
  text-align: center;
  line-height: 19px;
  flex: none;
  margin-right: 1px;
  border: 1px solid #aaa;
  border-bottom: none;
  border-radius: 3px 3px 0 0;
  background: linear-gradient(#f6f6f6, #d8d8d8);
  color: #222;
}
.tab:nth-child(3) {
  margin-right: 2px;
}
.tab.active {
  height: 23px;
  margin-bottom: -1px;
  background: #f0f0f0;
  color: #000;
  line-height: 20px;
  border-color: #999;
}

/* toolbar */
.toolbar {
  height: 28px;
  display: flex;
  align-items: center;
  padding: 2px 0 0 1px;
  box-sizing: border-box;
  border-bottom: 1px solid #888;
}
.tb {
  width: 27px;
  height: 25px;
  display: flex;
  align-items: center;
  justify-content: center;
}
.zoom-tb {
  margin-left: -2px;
  margin-right: 2px;
}
.ic {
  width: 22px;
  height: 22px;
}
.dither {
  background: repeating-conic-gradient(#fbfbfb 0 25%, #ececec 0 50%) 0 0 / 2px 2px;
}
.sep {
  width: 2px;
  height: 24px;
  margin: 0 3px;
  border-left: 1px solid #bbb;
  border-right: 1px solid #fff;
  box-sizing: border-box;
}
.test-select {
  width: 205px;
  display: flex;
  align-items: center;
  box-sizing: border-box;
  padding-left: 49px;
}
.test-select span {
  margin-left: 2px;
}
.test-arrow {
  margin-left: auto !important;
  margin-right: 6px;
}
.rpm {
  margin-left: auto;
  margin-right: 11px;
  display: flex;
  align-items: baseline;
  color: #000080;
}
.rpm b {
  font-size: 23px;
}
.rpm-val {
  margin-left: 13px;
}
.rpm span {
  color: #222;
  margin-left: 4px;
  font-size: 11.5px;
}

/* scope */
.scope {
  font-family: "Liberation Sans", Arial, sans-serif;
}
.crisp {
  shape-rendering: crispEdges;
}
.dots {
  stroke: #666;
  stroke-dasharray: 1 5;
}
.cursor {
  stroke: #ffff30;
  stroke-dasharray: 3 3;
}
.zero {
  stroke: #fff;
  stroke-dasharray: 2 2;
}
.trace {
  fill: none;
  stroke-width: 2.2;
  stroke-linejoin: round;
}
.green {
  stroke: #00e400;
}
.blue {
  stroke: #3060ff;
  stroke-width: 2;
}
.base {
  stroke: #3060ff;
  stroke-width: 3;
  shape-rendering: crispEdges;
}
.axis {
  font-size: 10px;
  fill: #d4dce6;
}
.time {
  fill: #c8e0d0;
}
.trace-name {
  font-size: 12.9px;
}
.band-letter {
  font-size: 16px;
  font-weight: bold;
  fill: #fff;
}
.mark-num {
  font-size: 8px;
  font-weight: bold;
  fill: #fff;
}
.ruler-txt {
  font-size: 12px;
  fill: #222;
}
.read {
  font-size: 21.5px;
}
.val {
  font-size: 11px;
  fill: #f01020;
}

/* scroll row */
.nav {
  height: 16px;
  display: flex;
  padding-left: 2px;
  padding-right: 2px;
  box-sizing: border-box;
  background: repeating-conic-gradient(#fcfcfc 0 25%, #f0f0f0 0 50%) 0 0 / 2px 2px;
}
.nb {
  height: 16px;
  box-sizing: border-box;
  display: flex;
  align-items: center;
  justify-content: center;
  flex: none;
  background: linear-gradient(#fafafa, #d4d4d4);
  border: 1px solid #c0c0c0;
  border-right-color: #888;
  border-bottom-color: #888;
}
.round,
.flat {
  width: 16px;
}
.w16 {
  width: 17px;
  margin-right: 1px;
}
.w22 {
  width: 22px;
  margin-right: 1px;
}
.w23 {
  width: 23px;
  margin-right: 1px;
}
.nav-combo {
  height: 16px;
  background: #fff;
  display: flex;
  align-items: center;
  padding-left: 3px;
  box-sizing: border-box;
  font-size: 11px;
}
.w-time {
  width: 68px;
}
.w-num {
  width: 64px;
  margin-right: 2px;
}
.thumb {
  width: 16px;
  height: 16px;
  margin-left: 12px;
  background: #f0f0f0;
  border: 1px solid #c8c8c8;
  box-sizing: border-box;
}
.nav-fill {
  flex: 1;
}
.page-num {
  width: 57px;
  text-align: center;
  font-size: 12px;
  line-height: 16px;
}

/* control panel */
.panel {
  height: 89px;
  box-sizing: border-box;
  border-bottom: 1px solid #999;
}
.strip {
  width: 510px;
  height: 7px;
  margin: 1px 0 0 385px;
  box-sizing: border-box;
  border: 1px solid #aaa;
  border-top: none;
  display: flex;
  align-items: center;
  padding: 0 5px;
}
.strip-dots {
  flex: 1;
  border-top: 1px dotted #3a8ae0;
  margin: 0 4px;
}
.tri {
  width: 0;
  height: 0;
  border: 4px solid transparent;
  border-top: 4px solid #2a7ae0;
  border-bottom: none;
}
.groups {
  display: flex;
  margin: 7px 0 0 240px;
  height: 72px;
}
.group {
  position: relative;
  height: 71px;
  box-sizing: border-box;
  border: 1px solid #c4c4c4;
  border-radius: 4px;
  margin-right: 6px;
  flex: none;
}
.legend {
  position: absolute;
  top: -6px;
  left: 6px;
  padding: 0 1px;
  background: #f0f0f0;
  font-size: 12px;
  line-height: 13px;
  font-weight: bold;
  white-space: nowrap;
}
.navy {
  color: #000080;
}
.grey {
  color: #666;
}
.faded {
  color: #9ab4d8;
}
.g-channel {
  width: 304px;
  display: flex;
  margin-right: 4px;
}
.ch-left {
  width: 208px;
  padding-left: 6px;
  box-sizing: border-box;
  flex: none;
}
.ch-tabs {
  display: flex;
  margin-top: -5px;
  height: 17px;
}
.ch {
  height: 17px;
  width: 25px;
  margin-right: 2px;
  flex: none;
  box-sizing: border-box;
  text-align: center;
  font-size: 13px;
  line-height: 15px;
  color: #888;
  border: 1px solid #16406e;
  border-radius: 2px;
  background: linear-gradient(#d4d4d4, #b4b4b4);
}
.ch.on-green {
  width: 47px;
  color: #000;
  font-weight: bold;
  background: linear-gradient(#00e800, #00ff00);
}
.ch.on-blue {
  width: 26px;
  color: #000;
  background: linear-gradient(#4a78ff, #2a50f0);
}
.ch-input-row {
  display: flex;
  align-items: center;
  margin: 8px 0 0 1px;
}
.ch-input {
  width: 177px;
  height: 21px;
  box-sizing: border-box;
  border: 2px solid #00ee00;
  background: #fff;
  display: flex;
  align-items: center;
  padding-left: 2px;
  margin-right: 4px;
  white-space: nowrap;
  flex: none;
}
.dots-btn {
  margin-left: auto;
  margin-right: 0;
  width: 17px;
  height: 17px;
  line-height: 11px;
  text-align: center;
  font-weight: bold;
  border: 1px solid #aaa;
  border-right-color: #666;
  border-bottom-color: #666;
  box-sizing: border-box;
  background: #eee;
}
.ch-icons {
  display: flex;
  margin: 1px 0 0 2px;
  align-items: center;
}
.ci {
  width: 24px;
  height: 23px;
  margin-right: 2px;
  flex: none;
  display: flex;
  align-items: center;
  justify-content: center;
}
.ci.narrow {
  margin: 0 3px;
  width: 18px;
}
.fx {
  font-family: "Liberation Serif", serif;
  font-style: italic;
  font-weight: bold;
  font-size: 16px;
  margin-left: 3px;
  width: 20px;
}
.fx small {
  font-size: 10px;
  margin-top: 4px;
}
.knob {
  margin-top: 5px;
}
.knob-lab {
  font-size: 10px;
  fill: #222;
}
.knob-lab.off {
  fill: #bbb;
}
.knob-val {
  font-size: 13px;
  fill: #000;
}
.g-freq {
  width: 104px;
}
.g-freq .knob {
  margin-top: 0;
}
.g-sync {
  width: 124px;
  padding: 13px 5px 0 8px;
}
.sync-row {
  display: flex;
  justify-content: space-between;
  align-items: center;
}
.sync-row.second {
  margin-top: 6px;
  justify-content: flex-start;
}
.si {
  width: 24px;
  height: 22px;
}
.si.first {
  margin: 0 3px 0 11px;
}
.sync-combo {
  width: 47px;
  background: transparent;
  border-color: #aaa;
  font-size: 13px;
  color: #333;
  padding-left: 5px;
}
.g-ctrl {
  width: 174px;
  display: grid;
  grid-template-columns: 34px 46px 46px 31px;
  grid-template-rows: 27px 28px;
  column-gap: 3px;
  row-gap: 2px;
  padding: 11px 0 0 3px;
}
.btn {
  box-sizing: border-box;
  border-radius: 3px;
  display: flex;
  align-items: center;
  justify-content: center;
  background: linear-gradient(#fafafa, #e4e4e4);
}
.b-flat {
  border: 1px solid #bbb;
  background: #eee;
}
.b-navy {
  border: 1px solid #16406e;
}
.b-red {
  border: 1px solid #e00;
  border-radius: 0;
  background: #fff;
}
.b-blue {
  border: 1px solid #2a70b0;
}
.b-start {
  grid-column: span 2;
  justify-content: flex-start;
  padding-left: 8px;
  border-width: 2px;
  font-weight: bold;
  font-size: 12px;
}
.b-start span {
  margin-left: 16px;
}
.b-time {
  color: #007a00;
  font-weight: bold;
  font-size: 13px;
  letter-spacing: 0.5px;
  background: #f0f0f0;
}
.g-timers {
  width: 68px;
  padding: 10px 0 0 8px;
}
.timer {
  width: 49px;
  height: 28px;
  margin-bottom: 2px;
  border: 1px solid #999;
  border-right-color: #666;
  border-bottom-color: #666;
  border-radius: 2px;
  padding-left: 3px;
}
.timer .arrow {
  margin-left: auto;
  margin-right: 4px;
}

/* status */
.status {
  height: 20px;
  display: flex;
  align-items: center;
  box-sizing: border-box;
  border-top: 1px solid #fff;
  padding-bottom: 2px;
}
.st-main {
  width: 189px;
  padding-left: 4px;
  box-sizing: border-box;
}
.st-fill {
  flex: 1;
  height: 18px;
  border-left: 2px solid #ccc;
  border-right: 1px solid #aaa;
  margin-left: 2px;
}
.st-ver {
  width: 46px;
  padding-left: 3px;
  box-sizing: border-box;
  font-size: 12px;
}

/* taskbar */
.taskbar {
  height: 39px;
  display: flex;
  align-items: center;
  box-sizing: border-box;
  border-top: 1px solid #14283c;
  color: #fff;
  background:
    linear-gradient(41.5deg, transparent 77.5%, rgba(180, 220, 245, 0.55) 79%, transparent 81%),
    linear-gradient(#2f88c8, #2a7cbc 40%, #2370b4);
}
.orb {
  margin-left: 5px;
  flex: none;
}
.task {
  height: 38px;
  width: 62px;
  display: flex;
  align-items: center;
  justify-content: center;
  flex: none;
  box-sizing: border-box;
}
.t-ie {
  margin-left: 14px;
}
.t-folder {
  width: 58px;
  margin-left: 1px;
}
.t-wmp {
  width: 52px;
}
.t-chrome {
  margin-left: 12px;
}
.t-app {
  width: 58px;
  margin-left: 2px;
}
.t-active {
  border: 1px solid #c8e0f0;
  border-radius: 3px;
  background: linear-gradient(#8fc0e0, #5f9fd0);
}
.ie {
  font-family: "Liberation Sans", sans-serif;
  font-size: 32px;
  font-weight: bold;
  fill: #58b4f4;
  stroke: #0f3f9a;
  stroke-width: 1;
  text-anchor: middle;
}
.ya {
  font-family: "Liberation Sans", sans-serif;
  font-size: 24px;
  font-weight: bold;
  fill: #e01a1a;
  text-anchor: middle;
}
.yb {
  font-family: "Liberation Sans", sans-serif;
  font-size: 28px;
  font-weight: bold;
  fill: #e01a1a;
  text-anchor: middle;
}
.tray {
  margin-left: auto;
  display: flex;
  align-items: center;
  gap: 8px;
  height: 38px;
}
.lang {
  font-size: 12px;
  margin-right: 6px;
  margin-top: -6px;
}
.clock {
  display: flex;
  flex-direction: column;
  align-items: center;
  width: 54px;
  margin-left: 8px;
  margin-right: 4px;
  gap: 3px;
  font-size: 12px;
}
.date {
  font-size: 11px;
}
.show-desk {
  width: 10px;
  height: 36px;
  margin-right: 4px;
  background: linear-gradient(#4a86b8, #2a6aa0);
  border: 1px solid #6a9ac0;
  box-sizing: border-box;
}
.t-auto {
  font-size: 6px;
  font-weight: bold;
  text-anchor: middle;
}
.t-zero {
  font-size: 11px;
  font-weight: bold;
}
.t-btn-auto {
  font-family: "Liberation Mono", monospace;
  font-size: 7.5px;
  font-weight: bold;
  text-anchor: middle;
}
</style>
